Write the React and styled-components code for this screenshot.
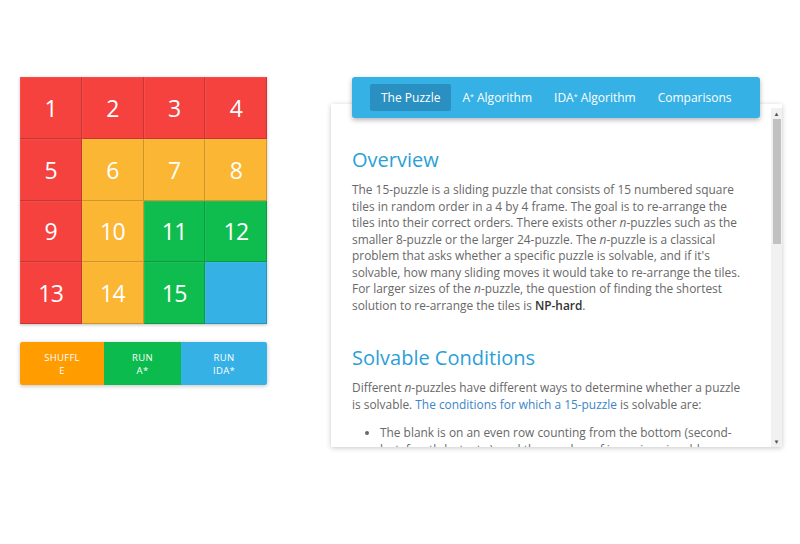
import React from 'react';
import styled, { createGlobalStyle } from 'styled-components';

const Global = createGlobalStyle`
  html, body { margin: 0; padding: 0; background: #fff; }
  body { font-family: "Open Sans", "Liberation Sans", sans-serif; }
  * { box-sizing: border-box; }
`

const Page = styled.div`
  display: flex;
  align-items: flex-start;
  gap: 64px;
  padding: 77px 18px 0 20px;
  width: 800px;
  height: 544px;
`

const Left = styled.div`
  width: 247px;
  display: flex;
  flex-direction: column;
  gap: 18px;
`

const Board = styled.div`
  display: grid;
  grid-template-columns: repeat(4, 1fr);
  grid-template-rows: repeat(4, 1fr);
  width: 247px;
  height: 247px;
  box-shadow: 0 1px 3px rgba(0,0,0,0.25);
`

const colors = {
  red: '#f5423f',
  yellow: '#fbb634',
  green: '#0fbd4f',
  blue: '#36b1e5',
}

const Tile = styled.div`
  display: flex;
  align-items: center;
  justify-content: center;
  background: ${p => colors[p.color]};
  color: #fff;
  font-size: 23px;
  font-weight: 500;
  letter-spacing: -0.5px;
  box-shadow: inset -1px -1px 0 rgba(0,0,0,0.18), inset 1px 1px 0 rgba(255,255,255,0.06);
`

const Buttons = styled.div`
  display: flex;
  height: 43px;
  border-radius: 2px;
  overflow: hidden;
  box-shadow: 0 1px 4px rgba(0,0,0,0.25);
`

const Btn = styled.button`
  width: ${p => p.w}px;
  border: none;
  padding: 0 ${p => p.pad}px;
  background: ${p => p.bg};
  color: #fff;
  font-family: "Open Sans", "Liberation Sans", sans-serif;
  font-size: 9.5px;
  line-height: 13px;
  letter-spacing: 0.3px;
  text-transform: uppercase;
  overflow-wrap: anywhere;
  text-align: center;
`

const Right = styled.div`
  width: 451px;
  display: flex;
  flex-direction: column;
`

const Nav = styled.nav`
  position: relative;
  z-index: 2;
  margin: 0 22px 0 21px;
  height: 41px;
  display: flex;
  align-items: center;
  padding-left: 18px;
  background: #36b1e5;
  border-radius: 3px;
  box-shadow: 0 2px 5px rgba(0,0,0,0.3);
`

const Tab = styled.div`
  height: 27px;
  padding: 0 11px;
  display: flex;
  align-items: center;
  border-radius: 2px;
  color: #fff;
  font-size: 12px;
  background: ${p => (p.active ? '#2a90c2' : 'transparent')};
  sup { font-size: 7px; position: relative; top: -1px; }
`

const Card = styled.div`
  margin-top: -14px;
  height: 343px;
  display: flex;
  background: #fff;
  box-shadow: 0 1px 5px rgba(0,0,0,0.22);
`

const Content = styled.div`
  flex: 1;
  overflow: hidden;
  padding: 43px 25px 0 21px;
  color: #686868;
  font-size: 11.9px;
  line-height: 16.5px;
`

const Track = styled.div`
  width: 11px;
  margin-top: 4px;
  display: flex;
  flex-direction: column;
  align-items: center;
  background: #f1f1f1;
`

const Arrow = styled.div`
  height: 11px;
  display: flex;
  align-items: center;
  justify-content: center;
  color: #505050;
  font-size: 6px;
  line-height: 1;
`

const Thumb = styled.div`
  width: 8px;
  height: 125px;
  background: #c1c1c1;
`

const Heading = styled.h2`
  margin: 0 0 8px;
  color: #2b9fd7;
  font-size: 20px;
  font-weight: 400;
  line-height: 26px;
`

const Para = styled.p`
  margin: 0 0 ${p => p.gap || 0}px;
  b { color: #333; font-weight: 600; }
  a { color: #3a86c8; text-decoration: none; }
`

const List = styled.ul`
  margin: 0;
  padding-left: 28px;
  li { margin-bottom: 6px; }
`

const tiles = [
  [1, 'red'], [2, 'red'], [3, 'red'], [4, 'red'],
  [5, 'red'], [6, 'yellow'], [7, 'yellow'], [8, 'yellow'],
  [9, 'red'], [10, 'yellow'], [11, 'green'], [12, 'green'],
  [13, 'red'], [14, 'yellow'], [15, 'green'], ['', 'blue'],
]

export default function App() {
  return (
    <>
      <Global />
      <Page>
        <Left>
          <Board>
            {tiles.map(([n, c], i) => (
              <Tile key={i} color={c}>{n}</Tile>
            ))}
          </Board>
          <Buttons>
            <Btn w={84} bg="#ff9c00" pad={23}>Shuffle</Btn>
            <Btn w={77} bg="#0cbb4d" pad={22}>Run A*</Btn>
            <Btn w={86} bg="#36b1e5" pad={22}>Run IDA*</Btn>
          </Buttons>
        </Left>
        <Right>
          <Nav>
            <Tab active>The Puzzle</Tab>
            <Tab>A<sup>*</sup>&nbsp;Algorithm</Tab>
            <Tab>IDA<sup>*</sup>&nbsp;Algorithm</Tab>
            <Tab>Comparisons</Tab>
          </Nav>
          <Card>
            <Content>
              <Heading>Overview</Heading>
              <Para gap={32}>
                The 15-puzzle is a sliding puzzle that consists of 15 numbered square
                tiles in random order in a 4 by 4 frame. The goal is to re-arrange the
                tiles into their correct orders. There exists other <i>n</i>-puzzles such as the
                smaller 8-puzzle or the larger 24-puzzle. The <i>n</i>-puzzle is a classical
                problem that asks whether a specific puzzle is solvable, and if it's
                solvable, how many sliding moves it would take to re-arrange the tiles.
                For larger sizes of the <i>n</i>-puzzle, the question of finding the shortest
                solution to re-arrange the tiles is <b>NP-hard</b>.
              </Para>
              <Heading>Solvable Conditions</Heading>
              <Para gap={12}>
                Different <i>n</i>-puzzles have different ways to determine whether a puzzle
                is solvable. <a href="#c">The conditions for which a 15-puzzle</a> is solvable are:
              </Para>
              <List>
                <li>The blank is on an even row counting from the bottom (second-last, fourth-last, etc.), and the number of inversions is odd.</li>
                <li>The blank is on an odd row counting from the bottom (last, third-last, fifth-last, etc.), and the number of inversions is even.</li>
              </List>
            </Content>
            <Track>
              <Arrow>▲</Arrow>
              <Thumb />
              <div style={{ flex: 1 }} />
              <Arrow>▼</Arrow>
            </Track>
          </Card>
        </Right>
      </Page>
    </>
  );
}
